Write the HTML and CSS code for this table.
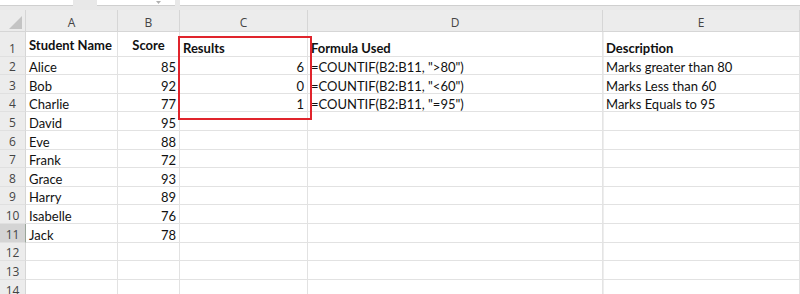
FILE: index.html
```html
<!DOCTYPE html>
<html lang="en">
<head>
    <meta charset="UTF-8">
    <title>Student Scores - COUNTIF</title>
    <link rel="stylesheet" href="styles.css">
</head>
<body>
    <div class="topbar">
        <div class="box name-box"></div>
        <div class="box fx-box"><span class="caret"></span></div>
        <div class="box formula-box"></div>
    </div>

    <div class="sheet">
        <div class="grid">
            <div class="hd corner"></div><div class="hd col">A</div><div class="hd col">B</div><div class="hd col">C</div><div class="hd col">D</div><div class="hd col">E</div>

            <div class="hd row">1</div><div class="c b raised">Student Name</div><div class="c b raised center">Score</div><div class="c b">Results</div><div class="c b">Formula Used</div><div class="c b">Description</div>
            <div class="hd row">2</div><div class="c">Alice</div><div class="c n">85</div><div class="c n">6</div><div class="c">=COUNTIF(B2:B11, "&gt;80")</div><div class="c">Marks greater than 80</div>
            <div class="hd row">3</div><div class="c">Bob</div><div class="c n">92</div><div class="c n">0</div><div class="c">=COUNTIF(B2:B11, "&lt;60")</div><div class="c">Marks Less than 60</div>
            <div class="hd row">4</div><div class="c">Charlie</div><div class="c n">77</div><div class="c n">1</div><div class="c">=COUNTIF(B2:B11, "=95")</div><div class="c">Marks Equals to 95</div>
            <div class="hd row">5</div><div class="c">David</div><div class="c n">95</div><div class="c"></div><div class="c"></div><div class="c"></div>
            <div class="hd row">6</div><div class="c">Eve</div><div class="c n">88</div><div class="c"></div><div class="c"></div><div class="c"></div>
            <div class="hd row">7</div><div class="c">Frank</div><div class="c n">72</div><div class="c"></div><div class="c"></div><div class="c"></div>
            <div class="hd row">8</div><div class="c">Grace</div><div class="c n">93</div><div class="c"></div><div class="c"></div><div class="c"></div>
            <div class="hd row">9</div><div class="c">Harry</div><div class="c n">89</div><div class="c"></div><div class="c"></div><div class="c"></div>
            <div class="hd row">10</div><div class="c">Isabelle</div><div class="c n">76</div><div class="c"></div><div class="c"></div><div class="c"></div>
            <div class="hd row active">11</div><div class="c">Jack</div><div class="c n">78</div><div class="c"></div><div class="c"></div><div class="c"></div>
            <div class="hd row">12</div><div class="c"></div><div class="c"></div><div class="c"></div><div class="c"></div><div class="c"></div>
            <div class="hd row">13</div><div class="c"></div><div class="c"></div><div class="c"></div><div class="c"></div><div class="c"></div>
            <div class="hd row">14</div><div class="c"></div><div class="c"></div><div class="c"></div><div class="c"></div><div class="c"></div>
        </div>

        <!-- highlight around the Results column -->
        <div class="highlight"></div>
    </div>
</body>
</html>
```

FILE: styles.css
```css
* {
    margin: 0;
    padding: 0;
    box-sizing: border-box;
}

body {
    width: 800px;
    height: 294px;
    overflow: hidden;
    background: #fff;
    font-family: 'Lato', 'Liberation Sans', sans-serif;
}

/* name box + formula bar strip */
.topbar {
    height: 10px;
    background: #e8e8e8;
    display: flex;
    align-items: flex-start;
}

.box {
    height: 6px;
    background: #fff;
    border-bottom: 1px solid #cfcfcf;
}

.name-box {
    width: 73px;
}

.fx-box {
    width: 78px;
    margin-left: 24px;
    display: flex;
    justify-content: flex-end;
    padding-right: 14px;
}

.caret {
    width: 5px;
    height: 3px;
    margin-top: 1px;
    background: #b0b0b0;
    clip-path: polygon(0 0, 100% 0, 50% 100%);
}

.formula-box {
    flex: 1;
    margin-left: 5px;
}

.sheet {
    position: relative;
}

.grid {
    display: grid;
    grid-template-columns: 26px 92px 62px 128px 295px 1fr;
    grid-template-rows: 22px 25px 18px 19px 18px 19px 19px 18px 19px 18px 19px 19px 18px 19px 19px;
}

/* headers */
.hd {
    background: #ececec;
    color: #444;
    font-family: 'Open Sans', 'Noto Sans', sans-serif;
    font-size: 12px;
    line-height: 1;
    display: flex;
    justify-content: center;
    border-right: 1px solid #d6d6d6;
    border-bottom: 1px solid #d6d6d6;
}

.hd.col {
    align-items: center;
    padding-top: 4px;
}

.hd.row {
    align-items: flex-end;
    padding-bottom: 1px;
    border-bottom-color: #e0e0e0;
}

.hd.row.active {
    background: #d4d4d4;
    border-right: 1px solid #9aa59a;
}

.hd.corner {
    align-items: flex-end;
    justify-content: flex-end;
    padding: 0 3px 2px 0;
}

.hd.corner::after {
    content: '';
    width: 13px;
    height: 13px;
    background: #c4c4c4;
    clip-path: polygon(100% 0, 100% 100%, 0 100%);
}

/* cells */
.c {
    font-size: 13px;
    line-height: 1;
    color: #111;
    display: flex;
    align-items: flex-end;
    padding: 0 3px 0 3px;
    white-space: nowrap;
    border-right: 1px solid #e2e2e2;
    border-bottom: 1px solid #e2e2e2;
}

.c:nth-child(6n+5) {
    border-right: 1px solid #e4e4e4;
    box-shadow: 1px 0 0 #eeeeee;
}

.c.n {
    justify-content: flex-end;
}

.c.b {
    font-weight: bold;
    padding-bottom: 1px;
}

.c.raised {
    padding-bottom: 4px;
}

.c.center {
    justify-content: center;
}

.highlight {
    position: absolute;
    left: 178px;
    top: 26px;
    width: 134px;
    height: 84px;
    border: 2px solid #e0242c;
}
```
